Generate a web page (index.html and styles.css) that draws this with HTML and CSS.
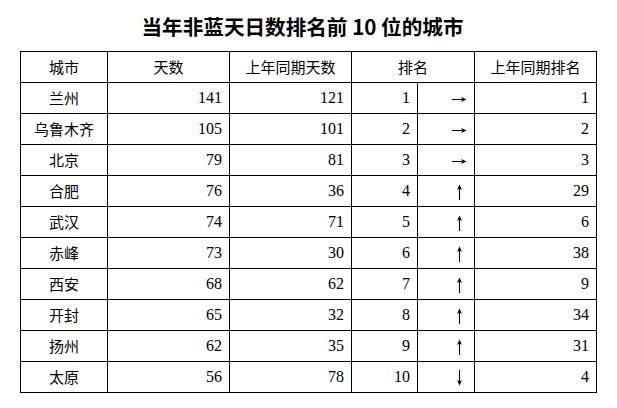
FILE: index.html
```html
<!DOCTYPE html>
<html lang="zh-CN">
<head>
<meta charset="utf-8">
<title>当年非蓝天日数排名前10位的城市</title>
<link rel="stylesheet" href="styles.css">
</head>
<body>
<div class="page">
  <h1 class="title">当年非蓝天日数排名前 10 位的城市</h1>
  <table class="rank-table">
    <colgroup>
      <col class="c-city"><col class="c-days"><col class="c-prev"><col class="c-rank"><col class="c-arrow"><col class="c-prank">
    </colgroup>
    <thead>
      <tr>
        <th>城市</th><th>天数</th><th>上年同期天数</th><th colspan="2">排名</th><th>上年同期排名</th>
      </tr>
    </thead>
    <tbody>
      <tr><td class="city">兰州</td><td class="num">141</td><td class="num">121</td><td class="num">1</td><td class="arrow"><svg class="ico" viewBox="0 0 15 16"><path d="M0 8.5H13" /><path class="head" d="M9 6L14.5 8.5L9 11L10.5 8.5Z"/></svg></td><td class="num">1</td></tr>
      <tr><td class="city">乌鲁木齐</td><td class="num">105</td><td class="num">101</td><td class="num">2</td><td class="arrow"><svg class="ico" viewBox="0 0 15 16"><path d="M0 8.5H13" /><path class="head" d="M9 6L14.5 8.5L9 11L10.5 8.5Z"/></svg></td><td class="num">2</td></tr>
      <tr><td class="city">北京</td><td class="num">79</td><td class="num">81</td><td class="num">3</td><td class="arrow"><svg class="ico" viewBox="0 0 15 16"><path d="M0 8.5H13" /><path class="head" d="M9 6L14.5 8.5L9 11L10.5 8.5Z"/></svg></td><td class="num">3</td></tr>
      <tr><td class="city">合肥</td><td class="num">76</td><td class="num">36</td><td class="num">4</td><td class="arrow"><svg class="ico" viewBox="0 0 15 16"><path d="M7.5 16V2" /><path class="head" d="M5 6L7.5 0.5L10 6L7.5 4.5Z"/></svg></td><td class="num">29</td></tr>
      <tr><td class="city">武汉</td><td class="num">74</td><td class="num">71</td><td class="num">5</td><td class="arrow"><svg class="ico" viewBox="0 0 15 16"><path d="M7.5 16V2" /><path class="head" d="M5 6L7.5 0.5L10 6L7.5 4.5Z"/></svg></td><td class="num">6</td></tr>
      <tr><td class="city">赤峰</td><td class="num">73</td><td class="num">30</td><td class="num">6</td><td class="arrow"><svg class="ico" viewBox="0 0 15 16"><path d="M7.5 16V2" /><path class="head" d="M5 6L7.5 0.5L10 6L7.5 4.5Z"/></svg></td><td class="num">38</td></tr>
      <tr><td class="city">西安</td><td class="num">68</td><td class="num">62</td><td class="num">7</td><td class="arrow"><svg class="ico" viewBox="0 0 15 16"><path d="M7.5 16V2" /><path class="head" d="M5 6L7.5 0.5L10 6L7.5 4.5Z"/></svg></td><td class="num">9</td></tr>
      <tr><td class="city">开封</td><td class="num">65</td><td class="num">32</td><td class="num">8</td><td class="arrow"><svg class="ico" viewBox="0 0 15 16"><path d="M7.5 16V2" /><path class="head" d="M5 6L7.5 0.5L10 6L7.5 4.5Z"/></svg></td><td class="num">34</td></tr>
      <tr><td class="city">扬州</td><td class="num">62</td><td class="num">35</td><td class="num">9</td><td class="arrow"><svg class="ico" viewBox="0 0 15 16"><path d="M7.5 16V2" /><path class="head" d="M5 6L7.5 0.5L10 6L7.5 4.5Z"/></svg></td><td class="num">31</td></tr>
      <tr><td class="city">太原</td><td class="num">56</td><td class="num">78</td><td class="num">10</td><td class="arrow"><svg class="ico" viewBox="0 0 15 16"><path d="M7.5 0V14" /><path class="head" d="M5 10L7.5 15.5L10 10L7.5 11.5Z"/></svg></td><td class="num">4</td></tr>
    </tbody>
  </table>
</div>
</body>
</html>
```

FILE: styles.css
```css
html, body {
  margin: 0;
  padding: 0;
  background: #fff;
  color: #000;
}

.page {
  padding-left: 20px;
  font-family: "Noto Sans CJK SC", sans-serif;
}

.title {
  margin: 0;
  padding: 16px 32px 14px 0;
  height: 21px;
  line-height: 21px;
  font-size: 20.6px;
  font-weight: bold;
  text-align: center;
  width: 565px;
}

.rank-table {
  border-collapse: collapse;
  table-layout: fixed;
  width: 577px;
  font-size: 15px;
}

.c-city { width: 87px; }
.c-days { width: 122px; }
.c-prev { width: 122px; }
.c-rank { width: 66px; }
.c-arrow { width: 57px; }
.c-prank { width: 122px; }

.rank-table tr {
  height: 31px;
}

.rank-table th,
.rank-table td {
  border: 1px solid #000;
  padding: 0 7px;
  line-height: 16px;
  white-space: nowrap;
}

.rank-table th {
  font-weight: normal;
  text-align: center;
}

.city {
  text-align: center;
}

.num {
  text-align: right;
  font-family: "Liberation Serif", serif;
  font-size: 16px;
  padding-right: 8px;
}

.arrow {
  text-align: right;
}

.ico {
  display: inline-block;
  width: 15px;
  height: 16px;
  vertical-align: middle;
  fill: none;
  stroke: #000;
  stroke-width: 1.1;
}

.ico .head {
  fill: #000;
  stroke: none;
}
```
